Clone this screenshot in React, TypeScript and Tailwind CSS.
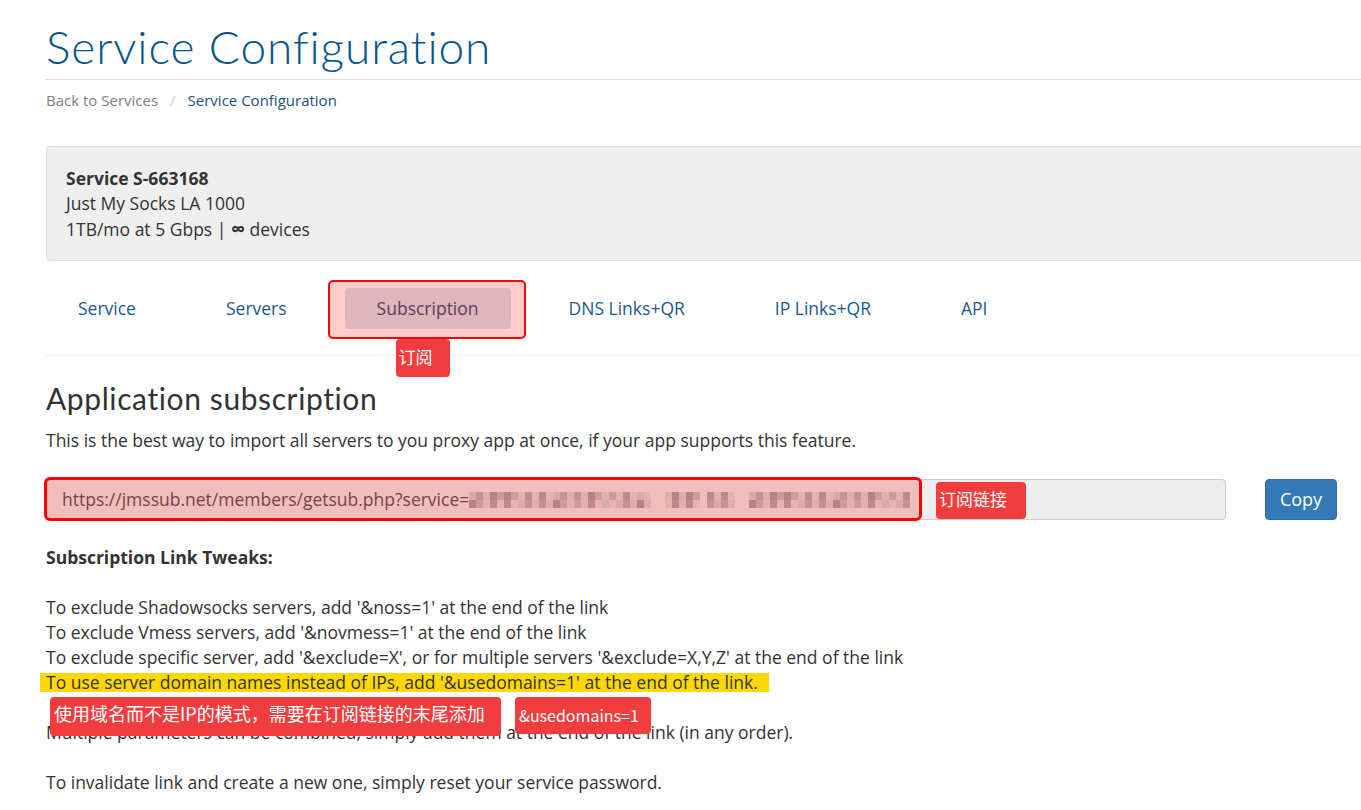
const tabs = ["Service", "Servers", "Subscription", "DNS Links+QR", "IP Links+QR", "API"];

const tweaks = [
  "To exclude Shadowsocks servers, add '&noss=1' at the end of the link",
  "To exclude Vmess servers, add '&novmess=1' at the end of the link",
  "To exclude specific server, add '&exclude=X', or for multiple servers '&exclude=X,Y,Z' at the end of the link",
];

// pixelated (blurred) part of the link
const blurShades = [
  "bg-[#cfd3d6]",
  "bg-[#bab4b7]",
  "bg-[#d6d8da]",
  "bg-[#a8a0a6]",
  "bg-[#c4c0c2]",
  "bg-[#dcdcdc]",
  "bg-[#b4a8ac]",
  "bg-[#e0e0e0]",
];
const gaps = [26, 27, 33, 38, 39];

const BlurredToken = () => (
  <div className="flex flex-col">
    {[0, 1].map((row) => (
      <div key={row} className="flex">
        {Array.from({ length: 63 }).map((_, i) => {
          const shade = blurShades[(i * 7 + row * 3 + (i % 5) * 2) % blurShades.length];
          return (
            <div
              key={i}
              className={`w-[7px] h-[8px] ${gaps.includes(i) ? "bg-transparent" : shade}`}
            />
          );
        })}
      </div>
    ))}
  </div>
);

const Note = ({ children, className }: { children: React.ReactNode; className: string }) => (
  <div
    className={`absolute bg-[#f23d3f] text-white rounded-[4px] font-['Noto_Sans_CJK_SC',sans-serif] ${className}`}
  >
    {children}
  </div>
);

export default function App() {
  return (
    <div className="w-full overflow-hidden bg-white">
      <div className="w-[1420px] px-[46px] font-['Open_Sans',sans-serif] text-[17.5px] leading-[25px] text-[#333]">
        {/* Header */}
        <div className="border-b border-[#dddddd] pb-[7px]">
          <h1 className="pt-[22px] font-['Lato',sans-serif] font-light text-[46px] leading-[50px] text-[#07568a] tracking-[0.9px]">
            Service Configuration
          </h1>
        </div>

        <div className="mt-[10px] flex items-center text-[15px] leading-[20px]">
          <span className="text-[#808080]">Back to Services</span>
          <span className="px-[12px] text-[#cccccc]">/</span>
          <span className="text-[#23527c]">Service Configuration</span>
        </div>

        {/* Service card */}
        <div className="mt-[36px] bg-[#efefef] border border-[#dddddd] rounded-[4px] pt-[19px] pb-[18px] px-[19px]">
          <div className="font-bold">Service S-663168</div>
          <div>Just My Socks LA 1000</div>
          <div>
            1TB/mo at 5 Gbps | <b className="text-[20px]">∞</b> devices
          </div>
        </div>

        {/* Tabs */}
        <div className="mt-[27px] pb-[26px] border-b border-[#eeeeee]">
          <ul className="flex gap-[26px]">
            {tabs.map((t) => (
              <li key={t} className="relative">
                <div
                  className={`px-[32px] py-[8px] rounded-[4px] ${
                    t === "Subscription" ? "bg-[#d7e3ea] text-[#2d4f73]" : "text-[#1c5a8c]"
                  }`}
                >
                  {t}
                </div>
                {t === "Subscription" && (
                  <>
                    <div className="absolute left-[-17px] right-[-15px] top-[-8px] bottom-[-10px] border-[2px] border-[#ff0000] rounded-[5px] bg-[#ff0000]/20" />
                    <Note className="left-[51px] top-[51px] w-[54px] h-[38px] pl-[3px] pt-[5px] text-[17px] leading-[26px]">
                      订阅
                    </Note>
                  </>
                )}
              </li>
            ))}
          </ul>
        </div>

        {/* Subscription */}
        <h3 className="mt-[26px] font-['Lato',sans-serif] text-[30px] leading-[33px] text-[#333] tracking-[0.6px]">
          Application subscription
        </h3>
        <p className="mt-[13px]">
          This is the best way to import all servers to you proxy app at once, if your app supports this feature.
        </p>

        <div className="mt-[26px] flex items-center">
          <div className="relative w-[1180px] h-[41px] bg-[#eeeeee] border border-[#cccccc] rounded-[4px] flex items-center pl-[15px] text-[#555]">
            <span>https://jmssub.net/members/getsub.php?service=</span>
            <BlurredToken />
            <div className="absolute left-[-3px] top-[-3px] w-[878px] h-[44px] border-[3px] border-[#ff0000] rounded-[6px] bg-[#ff0000]/20" />
            <Note className="left-[889px] top-[2px] w-[90px] h-[37px] pl-[3px] pt-[4px] text-[17px] leading-[26px]">
              订阅链接
            </Note>
          </div>
          <button className="ml-[39px] w-[72px] h-[41px] bg-[#337ab7] border border-[#2e6da4] rounded-[4px] text-white text-[18px]">
            Copy
          </button>
        </div>

        {/* Tweaks */}
        <div className="mt-[25px] pb-[20px]">
          <div className="font-bold">Subscription Link Tweaks:</div>
          <div className="h-[25px]" />
          {tweaks.map((line) => (
            <div key={line}>{line}</div>
          ))}
          <div className="relative h-[25px] flex items-center">
            <span className="-ml-[6px] pl-[6px] pr-[11px] bg-[#fed800] leading-[19px] h-[19px] flex items-center">
              To use server domain names instead of IPs, add '&amp;usedomains=1' at the end of the link.
            </span>
            <Note className="left-[4px] top-[27px] w-[451px] h-[39px] pl-[4px] pt-[2px] text-[18px] leading-[28px] z-10">
              使用域名而不是IP的模式，需要在订阅链接的末尾添加
            </Note>
            <Note className="left-[469px] top-[27px] w-[136px] h-[37px] pl-[4px] pt-[4px] text-[16px] leading-[28px] z-10">
              &amp;usedomains=1
            </Note>
          </div>
          <div className="h-[25px]" />
          <div>Multiple parameters can be combined, simply add them at the end of the link (in any order).</div>
          <div className="h-[25px]" />
          <div>To invalidate link and create a new one, simply reset your service password.</div>
        </div>
      </div>
    </div>
  );
}
